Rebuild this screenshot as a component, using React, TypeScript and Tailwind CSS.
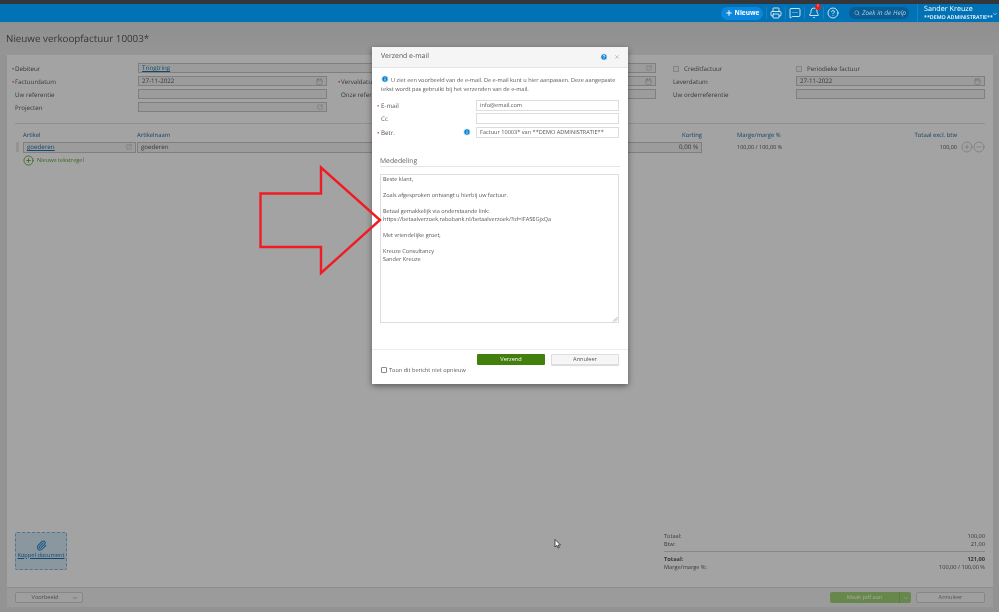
import React from "react";
import { Printer, MessageSquareMore, Bell, CircleHelp, Search, ChevronDown, Plus, Paperclip, CirclePlus, CircleMinus, X, Calendar, SquareArrowOutUpRight, Info } from "lucide-react";

const Box = ({ children, icon, className = "" }: { children?: React.ReactNode; icon?: "cal" | "pick"; className?: string }) => (
  <div className={`h-[10px] border border-[#c4c4c4] bg-[#f0f0f0] flex items-center justify-between px-[3px] text-[6.2px] text-[#555] ${className}`}>
    <span>{children}</span>
    {icon === "cal" && <Calendar size={7} strokeWidth={1.5} className="text-[#999]" />}
    {icon === "pick" && <SquareArrowOutUpRight size={6} strokeWidth={1.5} className="text-[#999]" />}
  </div>
);

const Label = ({ children, req, className = "" }: { children: React.ReactNode; req?: boolean; className?: string }) => (
  <div className={`relative pt-[1px] text-[6.2px] text-[#555] leading-[10px] ${className}`}>
    {req && <span className="absolute left-[-3px] text-[#d33]">•</span>}
    {children}
  </div>
);

const Check = ({ className = "" }: { className?: string }) => <span className={`inline-block w-[6px] h-[6px] border border-[#ccc] bg-[#f4f4f4] ${className}`} />;

export default function App() {
  return (
    <div className="relative w-[999px] h-[612px] overflow-hidden bg-[#e2e2e2] flex flex-col font-['Open_Sans',sans-serif] [text-rendering:geometricPrecision] blur-[0.4px]">
      <div className="h-[4px] bg-[#33373b] shrink-0" />
      <header className="h-[18px] shrink-0 bg-[#0072b5] flex items-center justify-end text-white">
        <button className="w-[42px] h-[13px] rounded-full bg-[#0b88dd] flex items-center justify-center gap-[2px] text-[6.5px] font-bold mr-[3px]">
          <Plus size={8} strokeWidth={3} />Nieuwe
        </button>
        <div className="flex items-center">
          <div className="w-[19px] flex justify-center border-l border-[#1a82c0]"><Printer size={12} strokeWidth={1.6} /></div>
          <div className="w-[19px] flex justify-center border-l border-[#1a82c0]"><MessageSquareMore size={12} strokeWidth={1.6} /></div>
          <div className="relative w-[19px] flex justify-center border-l border-[#1a82c0]">
            <Bell size={12} strokeWidth={1.6} />
            <span className="absolute top-[-3px] left-[10px] w-[6px] h-[6px] rounded-full bg-[#e02020] text-[4px] leading-[6px] text-center">1</span>
          </div>
          <div className="w-[19px] flex justify-center border-l border-[#1a82c0]"><CircleHelp size={12} strokeWidth={1.6} /></div>
        </div>
        <div className="w-[60px] h-[12px] ml-[7px] rounded-full bg-[#0a5c92] flex items-center gap-[2px] pl-[5px] text-[6.5px] italic text-[#a9cfe6]">
          <Search size={6} strokeWidth={2} />Zoek in de Help
        </div>
        <div className="h-full w-[82px] ml-[8px] border-l border-[#1a82c0] pl-[6px] relative leading-[8px] flex flex-col justify-center">
          <div className="text-[7.2px]">Sander Kreuze</div>
          <div className="text-[5.3px] font-semibold">**DEMO ADMINISTRATIE**</div>
          <ChevronDown size={6} className="absolute right-[1px] top-[7px]" />
        </div>
      </header>

      <div className="h-[33px] shrink-0 pl-[6px] pt-[9px] text-[9.8px] leading-[16px] text-[#555] bg-gradient-to-b from-[#dcdcdc] to-[#e6e6e6]">Nieuwe verkoopfactuur 10003*</div>

      <main className="flex-1 ml-[7px] mr-[6px] bg-[#fbfbfb] pl-[8px] pr-[8px] pt-[8px] flex flex-col">
        <div className="grid grid-cols-[123px_189px_14px_123px_192px_17px_123px_189px] auto-rows-[10px] gap-y-[3px] items-center">
          <Label req>Debiteur</Label>
          <Box icon="pick" className="col-span-4"><span className="text-[#1d6fa8] underline">Tringtring</span></Box>
          <div />
          <Label><Check className="mr-[5px] align-[-1px]" />Creditfactuur</Label>
          <Label><Check className="mr-[5px] align-[-1px]" />Periodieke factuur</Label>

          <Label req>Factuurdatum</Label>
          <Box icon="cal">27-11-2022</Box>
          <div />
          <Label req>Vervaldatum</Label>
          <Box icon="cal">11-12-2022</Box>
          <div />
          <Label>Leverdatum</Label>
          <Box icon="cal">27-11-2022</Box>

          <Label>Uw referentie</Label>
          <Box />
          <div />
          <Label>Onze referentie</Label>
          <Box />
          <div />
          <Label>Uw orderreferentie</Label>
          <Box />

          <Label>Projecten</Label>
          <Box icon="pick" />
        </div>

        <div className="mt-[11px] border-t border-[#dcdcdc] pt-[6px] grid grid-cols-[8px_114px_490px_75px_35px_130px_90px_28px] items-center text-[5.9px]">
          <div />
          <div className="text-[#226a9c] leading-[10px]">Artikel</div>
          <div className="text-[#226a9c] leading-[10px]">Artikelnaam</div>
          <div className="text-[#226a9c] leading-[10px] text-right">Korting</div>
          <div />
          <div className="text-[#226a9c] leading-[10px]">Marge/marge %</div>
          <div className="text-[#226a9c] leading-[10px] text-right">Totaal excl. btw</div>
          <div />

          <div className="mt-[1px] h-[10px] w-[3px] ml-[1px] bg-[#e4e4e4]" />
          <Box icon="pick" className="mt-[1px] mr-[1px] h-[11px] text-[5.6px]"><span className="text-[#1d6fa8] underline">goederen</span></Box>
          <Box className="mt-[1px] h-[11px] text-[5.6px]">goederen</Box>
          <Box className="mt-[1px] h-[11px] text-[5.6px] [&>span]:ml-auto">0,00 %</Box>
          <div />
          <div className="mt-[1px] text-[5.5px] text-[#555]">100,00 / 100,00 %</div>
          <div className="mt-[1px] text-[5.5px] text-[#555] text-right">100,00</div>
          <div className="mt-[1px] flex justify-end gap-0 text-[#999]">
            <CirclePlus size={12} strokeWidth={1} />
            <CircleMinus size={12} strokeWidth={1} />
          </div>
        </div>

        <div className="ml-[8px] mt-[2px] flex items-center gap-[3px] text-[5.6px] text-[#5d9a2c]">
          <CirclePlus size={11} strokeWidth={1.6} className="text-[#4d8f1a]" />Nieuwe tekstregel
        </div>

        <div className="mt-auto mb-[16px] flex items-end justify-between">
          <div className="w-[52px] h-[38px] mb-[1px] rounded-[2px] border border-dashed border-[#7fb3d8] bg-[#d6e8f5] flex flex-col items-center justify-center pb-[3px] text-[5.7px] text-[#1d6fa8] underline">
            <Paperclip size={11} strokeWidth={2.2} className="text-[#1a83c9]" />
            <span className="whitespace-nowrap">Koppel document</span>
          </div>
          <div className="w-[321px] text-[5.6px] leading-[8px] text-[#555]">
            <div className="flex justify-between"><span>Totaal:</span><span>100,00</span></div>
            <div className="flex justify-between"><span>Btw:</span><span>21,00</span></div>
            <div className="my-[3px] border-t border-[#cfcfcf]" />
            <div className="flex justify-between font-bold"><span>Totaal:</span><span>121,00</span></div>
            <div className="flex justify-between"><span>Marge/marge %:</span><span>100,00 / 100,00 %</span></div>
          </div>
        </div>
      </main>

      <footer className="h-[20px] shrink-0 mb-[5px] ml-[7px] mr-[6px] pl-[8px] pr-[8px] bg-[#efefef] border-t border-[#d8d8d8] flex items-center justify-between text-[5.6px]">
        <button className="w-[68px] h-[11px] border border-[#cfcfcf] rounded-[2px] bg-[#f4f4f4] text-[#777] relative pr-[8px]">Voorbeeld<ChevronDown size={6} className="absolute right-[4px] top-[2px]" /></button>
        <div className="flex gap-[5px]">
          <div className="flex w-[81px] h-[11px] rounded-[2px] bg-[#a0d076] text-white">
            <span className="flex-1 text-center leading-[11px]">Maak pdf aan</span>
            <span className="w-[12px] border-l border-[#8cbc62] flex items-center justify-center"><ChevronDown size={6} /></span>
          </div>
          <button className="w-[69px] h-[11px] border border-[#cfcfcf] rounded-[2px] bg-[#f4f4f4] text-[#888]">Annuleer</button>
        </div>
      </footer>

      <div className="absolute inset-x-0 top-[22px] bottom-0 bg-black/35" />

      <div className="absolute left-[372px] top-[47px] w-[256px] h-[337px] bg-white shadow-[0_2px_6px_rgba(0,0,0,0.45)] flex flex-col text-[5.6px] text-[#555]">
        <div className="h-[21px] shrink-0 bg-[#f5f5f5] border-b border-[#e4e4e4] flex items-center pl-[9px] pr-[8px] text-[6.9px] text-[#555]">
          <span className="flex-1">Verzend e-mail</span>
          <CircleHelp size={8} strokeWidth={2.5} className="mr-[6px] fill-[#0b7fd0] text-white" />
          <X size={6} strokeWidth={1.5} className="text-[#777]" />
        </div>
        <div className="px-[8px] flex-1 flex flex-col">
          <p className="mt-[7px] leading-[9px] pl-[1px]">
            <Info size={8} strokeWidth={2.5} className="inline-block mr-[2px] align-[-1.5px] fill-[#0b7fd0] text-white" />
            U ziet een voorbeeld van de e-mail. De e-mail kunt u hier aanpassen. Deze aangepaste tekst wordt pas gebruikt bij het verzenden van de e-mail.
          </p>
          <div className="mt-[6px] grid grid-cols-[96px_143px] auto-rows-[11px] gap-y-[2.5px] items-center">
            <Label req className="pl-[1px] text-[5.6px]">E-mail</Label>
            <div className="h-[11px] border border-[#ddd] px-[3px] leading-[9px]">info@email.com</div>
            <Label className="pl-[1px] text-[5.6px]">Cc</Label>
            <div className="h-[11px] border border-[#ddd]" />
            <div className="flex items-center justify-between pr-[5px]">
              <Label req className="pl-[1px] text-[5.6px]">Betr.</Label>
              <Info size={8} strokeWidth={2.5} className="fill-[#0b7fd0] text-white" />
            </div>
            <div className="h-[11px] border border-[#ddd] px-[3px] leading-[9px] whitespace-nowrap">Factuur 10003* van **DEMO ADMINISTRATIE**</div>
          </div>
          <div className="mt-[17px] border-b border-[#e6e6e6] text-[6.8px] leading-[11px] text-[#666]">Mededeling</div>
          <div className="relative mt-[7px] w-[239px] h-[149px] border border-[#ddd] px-[2px] text-[5.55px] leading-[8.1px] text-[#555]">
            <div>Beste klant,</div>
            <div className="mt-[8.1px]">Zoals afgesproken ontvangt u hierbij uw factuur.</div>
            <div className="mt-[8.1px]">Betaal gemakkelijk via onderstaande link:</div>
            <div>https://betaalverzoek.rabobank.nl/betaalverzoek/?id=IFA5EGjxQa</div>
            <div className="mt-[8.1px]">Met vriendelijke groet,</div>
            <div className="mt-[8.1px]">Kreuze Consultancy</div>
            <div>Sander Kreuze</div>
            <svg className="absolute right-0 bottom-0" width="6" height="6" viewBox="0 0 6 6"><path d="M1 5.5 5.5 1M3 5.5 5.5 3" stroke="#999" strokeWidth="0.7" /></svg>
          </div>
        </div>
        <div className="h-[35px] shrink-0 border-t border-[#ececec] px-[9px] pt-[4px] relative">
          <div className="flex justify-end gap-[6px]">
            <button className="w-[68px] h-[11px] rounded-[1px] bg-[#437f0c] text-white leading-[11px]">Verzend</button>
            <button className="w-[68px] h-[11px] rounded-[1px] border border-[#ddd] bg-[#f6f6f6] text-[#555] leading-[9px] shadow-[0_1px_1px_rgba(0,0,0,0.15)]">Annuleer</button>
          </div>
          <div className="mt-[1px] flex items-center gap-[2px]"><span className="w-[6px] h-[6px] rounded-[1px] border border-[#888] bg-white" /><span className="leading-[8px]">Toon dit bericht niet opnieuw</span></div>
        </div>
      </div>

      <svg className="absolute left-[255px] top-[160px]" width="130" height="120" viewBox="255 160 130 120">
        <path d="M260.5 193.5H321V167.5L380 220L321 273V247H260.5Z" fill="none" stroke="#f01c25" strokeWidth="2.4" />
      </svg>

      <svg className="absolute left-[554px] top-[539px]" width="8" height="10" viewBox="0 0 8 10">
        <path d="M1 .5V8L2.8 6.4 4 9l1.2-.5L4 6H6.5Z" fill="#fff" stroke="#111" strokeWidth="0.7" />
      </svg>
    </div>
  );
}
